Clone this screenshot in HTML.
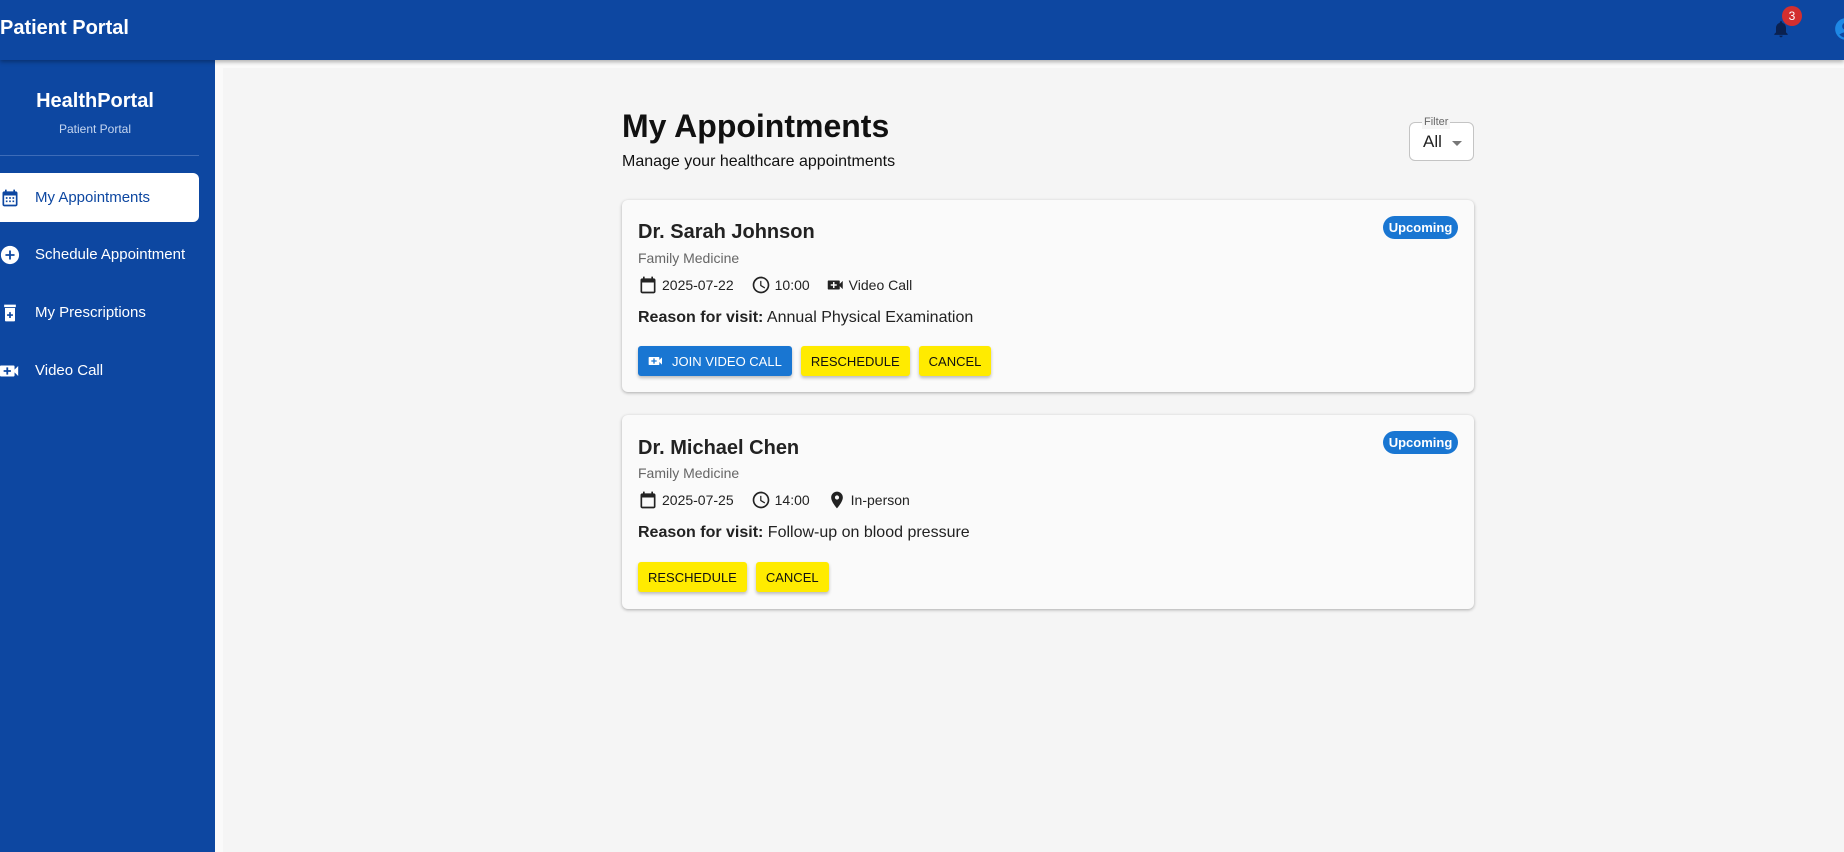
<!DOCTYPE html>
<html><head><meta charset="utf-8"><style>
*{box-sizing:border-box;margin:0;padding:0}
body{width:1844px;height:852px;overflow:hidden;background:#f5f5f5;font-family:"Liberation Sans",Arial,sans-serif;position:relative}
.top{position:absolute;left:0;top:0;width:1844px;height:60px;background:#0d47a1;box-shadow:0 2px 4px rgba(0,0,0,.3);z-index:3}
.top h1{position:absolute;left:0;top:17px;font-size:20px;color:#fff;font-weight:bold}
.side{position:absolute;left:0;top:60px;width:215px;height:792px;background:#0d47a1;color:#fff}
.strip{position:absolute;left:215px;top:60px;width:1629px;height:792px;border-left:8px solid #fafafa;border-top:8px solid #fafafa}
.side .brand{position:absolute;left:0;width:190px;text-align:center;top:30px;font-size:20px;font-weight:bold}
.side .sub{position:absolute;left:0;width:190px;text-align:center;top:62px;font-size:12px;color:#c5d6f0}
.side .div{position:absolute;left:0;top:95px;width:199px;height:1px;background:#3d6cb8}
.item{position:absolute;left:0;width:199px;height:49px;display:flex;align-items:center;font-size:15px}
.item svg{margin-left:0;margin-right:15px}
.item.sel{background:#fff;color:#0d47a1;border-radius:0 6px 6px 0}
.hd{position:absolute;left:622px;top:108px;font-size:32px;font-weight:bold;color:#111}
.sh{position:absolute;left:622px;top:153px;font-size:16px;color:#111}
.filter{position:absolute;left:1409px;top:122px;width:65px;height:39px;border:1px solid #c4c4c4;border-radius:6px;background:#fff}
.filter .lb{position:absolute;left:12px;top:-8px;font-size:11px;color:#666;background:#f5f5f5;padding:0 2px;line-height:14px}
.filter .v{position:absolute;left:13px;top:9px;font-size:17px;color:#222}
.filter .ar{position:absolute;left:42px;top:18px;border:5px solid transparent;border-top-color:#777}
.card{position:absolute;left:622px;width:852px;background:#fafafa;border-radius:6px;box-shadow:0 1px 3px rgba(0,0,0,.3)}
.card .nm{position:absolute;left:16px;top:21px;font-size:20px;font-weight:bold;color:#222}
.card .sp{position:absolute;left:16px;top:50px;font-size:14px;color:#666}
.card .meta{position:absolute;left:16px;top:75px;font-size:14px;color:#222;display:flex;align-items:center}
.card .meta svg{margin-right:4px}
.card .meta span{margin-right:17px}
.card .rs{position:absolute;left:16px;top:109px;font-size:16px;color:#222}
.badge{position:absolute;left:761px;top:16px;width:75px;height:23px;border-radius:12px;background:#1976d2;color:#fff;font-size:13px;font-weight:bold;text-align:center;line-height:23px}
.btns{position:absolute;left:16px;display:flex}
.btn{height:30px;padding:0 10px;display:flex;align-items:center;font-size:13px;border-radius:3px;margin-right:9px;box-shadow:0 2px 3px rgba(0,0,0,.25)}
.y{background:#ffeb00;color:#111}
.b{background:#1976d2;color:#fff}
</style></head><body>
<div class="top"><h1>Patient Portal</h1>
<svg style="position:absolute;left:1771px;top:18px" width="20" height="22" viewBox="0 0 24 24"><path fill="#0a2150" d="M12 22c1.1 0 2-.9 2-2h-4c0 1.1.9 2 2 2zm6-6v-5c0-3.07-1.64-5.64-4.5-6.32V4c0-.83-.67-1.5-1.5-1.5s-1.5.67-1.5 1.5v.68C7.630 5.36 6 7.92 6 11v5l-2 2v1h16v-1l-2-2z"/></svg>
<div style="position:absolute;left:1782px;top:6px;width:20px;height:20px;border-radius:50%;background:#d32f2f;color:#fff;font-size:12px;text-align:center;line-height:20px">3</div>
<svg style="position:absolute;left:1833px;top:16px" width="26" height="26" viewBox="0 0 24 24"><path fill="#1e88e5" d="M12 2C6.48 2 2 6.48 2 12s4.48 10 10 10 10-4.48 10-10S17.52 2 12 2zm0 4c1.93 0 3.5 1.57 3.5 3.5S13.930 13 12 13s-3.5-1.57-3.5-3.5S10.07 6 12 6zm0 14c-2.03 0-4.43-.82-6.14-2.88C7.55 15.8 9.68 15 12 15s4.45.8 6.14 2.12C16.43 19.18 14.03 20 12 20z"/></svg>
</div>
<div class="strip"></div>
<div class="side">
<div class="brand">HealthPortal</div><div class="sub">Patient Portal</div><div class="div"></div>
<div class="item sel" style="top:113px"><svg width="20" height="22" viewBox="0 0 24 24"><path fill="#0d47a1" d="M19 4h-1V2h-2v2H8V2H6v2H5c-1.1 0-2 .9-2 2v14c0 1.1.9 2 2 2h14c1.1 0 2-.9 2-2V6c0-1.1-.9-2-2-2zm0 16H5V9h14v11zM7 11h2v2H7zm4 0h2v2h-2zm4 0h2v2h-2zM7 15h2v2H7zm4 0h2v2h-2zm4 0h2v2h-2z"/></svg>My Appointments</div>
<div class="item" style="top:170px"><svg width="20" height="22" viewBox="1 1 22 22"><path fill="#fff" d="M12 2C6.48 2 2 6.48 2 12s4.48 10 10 10 10-4.48 10-10S17.52 2 12 2zm5 11h-4v4h-2v-4H7v-2h4V7h2v4h4v2z"/></svg>Schedule Appointment</div>
<div class="item" style="top:228px"><svg width="20" height="22" viewBox="0 0 24 24"><path fill="#fff" d="M5 2h14v3H5zM6 6h12v15c0 .6-.4 1-1 1H7c-.6 0-1-.4-1-1zm5 5v2.5H8.5v2H11V18h2v-2.5h2.5v-2H13V11z"/></svg>My Prescriptions</div>
<div class="item" style="top:286px"><svg width="20" height="22" viewBox="1 1 22 22"><path fill="#fff" d="M17 10.5V7c0-.55-.45-1-1-1H2c-.55 0-1 .45-1 1v10c0 .55.45 1 1 1h14c.55 0 1-.45 1-1v-3.5l4 4v-11l-4 4zM13 13h-3v3H8v-3H5v-2h3V8h2v3h3v2z"/></svg>Video Call</div>
</div>
<div class="hd">My Appointments</div>
<div class="sh">Manage your healthcare appointments</div>
<div class="filter"><div class="lb">Filter</div><div class="v">All</div><div class="ar"></div></div>

<div class="card" style="top:200px;height:192px">
<div class="nm">Dr. Sarah Johnson</div><div class="badge">Upcoming</div>
<div class="sp">Family Medicine</div>
<div class="meta"><svg width="20" height="20" viewBox="0 0 24 24"><path fill="#222" d="M19 4h-1V2h-2v2H8V2H6v2H5c-1.1 0-2 .9-2 2v14c0 1.1.9 2 2 2h14c1.1 0 2-.9 2-2V6c0-1.1-.9-2-2-2zm0 16H5V9h14v11z"/></svg><span>2025-07-22</span><svg width="20" height="20" viewBox="0 0 24 24"><path fill="#222" d="M12 2C6.5 2 2 6.5 2 12s4.5 10 10 10 10-4.5 10-10S17.5 2 12 2zm0 18c-4.4 0-8-3.6-8-8s3.6-8 8-8 8 3.6 8 8-3.6 8-8 8zm.5-13H11v6l5.2 3.2.8-1.3-4.5-2.7z"/></svg><span>10:00</span><svg width="18" height="18" viewBox="0 0 24 24"><path fill="#222" d="M17 10.5V7c0-.55-.45-1-1-1H2c-.55 0-1 .45-1 1v10c0 .55.45 1 1 1h14c.55 0 1-.45 1-1v-3.5l4 4v-11l-4 4zM13 13h-3v3H8v-3H5v-2h3V8h2v3h3v2z"/></svg><span>Video Call</span></div>
<div class="rs"><b>Reason for visit:</b> Annual Physical Examination</div>
<div class="btns" style="top:146px"><div class="btn b"><svg width="16" height="16" viewBox="0 0 24 24" style="margin-right:8px"><path fill="#fff" d="M17 10.5V7c0-.55-.45-1-1-1H2c-.55 0-1 .45-1 1v10c0 .55.45 1 1 1h14c.55 0 1-.45 1-1v-3.5l4 4v-11l-4 4zM13 13h-3v3H8v-3H5v-2h3V8h2v3h3v2z"/></svg>JOIN VIDEO CALL</div><div class="btn y">RESCHEDULE</div><div class="btn y">CANCEL</div></div>
</div>

<div class="card" style="top:415px;height:194px">
<div class="nm" style="top:22px">Dr. Michael Chen</div><div class="badge">Upcoming</div>
<div class="sp">Family Medicine</div>
<div class="meta"><svg width="20" height="20" viewBox="0 0 24 24"><path fill="#222" d="M19 4h-1V2h-2v2H8V2H6v2H5c-1.1 0-2 .9-2 2v14c0 1.1.9 2 2 2h14c1.1 0 2-.9 2-2V6c0-1.1-.9-2-2-2zm0 16H5V9h14v11z"/></svg><span>2025-07-25</span><svg width="20" height="20" viewBox="0 0 24 24"><path fill="#222" d="M12 2C6.5 2 2 6.5 2 12s4.5 10 10 10 10-4.5 10-10S17.5 2 12 2zm0 18c-4.4 0-8-3.6-8-8s3.6-8 8-8 8 3.6 8 8-3.6 8-8 8zm.5-13H11v6l5.2 3.2.8-1.3-4.5-2.7z"/></svg><span>14:00</span><svg width="20" height="20" viewBox="0 0 24 24"><path fill="#222" d="M12 2C8.13 2 5 5.130 5 9c0 5.25 7 13 7 13s7-7.75 7-13c0-3.87-3.13-7-7-7zm0 9.5c-1.38 0-2.5-1.12-2.5-2.5s1.12-2.5 2.5-2.5 2.5 1.12 2.5 2.5-1.12 2.5-2.5 2.5z"/></svg><span>In-person</span></div>
<div class="rs"><b>Reason for visit:</b> Follow-up on blood pressure</div>
<div class="btns" style="top:147px"><div class="btn y">RESCHEDULE</div><div class="btn y">CANCEL</div></div>
</div>
</body></html>
